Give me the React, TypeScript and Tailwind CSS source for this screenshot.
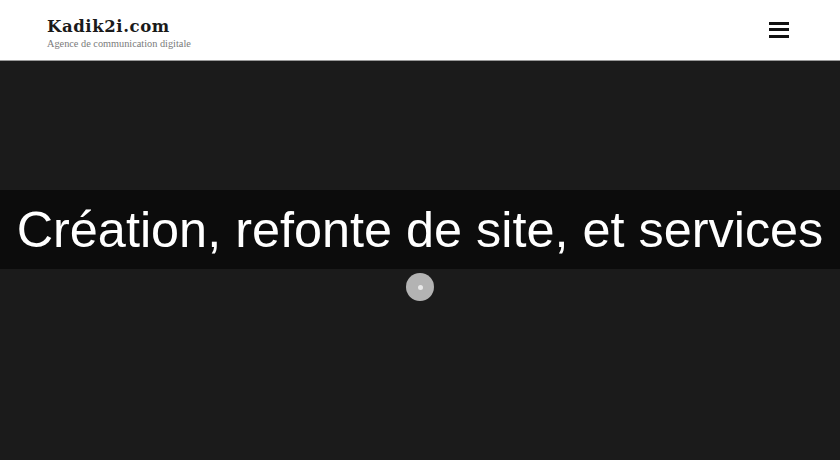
import React from 'react';

export default function App() {
  return (
    <div className="w-[840px] h-[460px] overflow-hidden bg-[#1b1b1b] flex flex-col">
      {/* Header */}
      <header className="h-[61px] shrink-0 bg-white border-b border-[#9a9a9a] flex items-center justify-between pl-[47px] pr-[51px]">
        <div className="flex flex-col pt-[7px]">
          <span className="text-[16.5px] leading-[20px] font-bold text-[#1a1a1a] tracking-[0.6px] [font-family:'DejaVu_Serif',serif]">
            Kadik2i.com
          </span>
          <span className="text-[10.3px] leading-[13px] text-[#7a7a7a] [font-family:'Liberation_Serif',serif]">
            Agence de communication digitale
          </span>
        </div>
        <button className="w-[20px] h-[16px] flex flex-col justify-between mt-[-1px]" aria-label="Menu">
          <span className="block h-[3px] w-full bg-[#111]" />
          <span className="block h-[3px] w-full bg-[#111]" />
          <span className="block h-[3px] w-full bg-[#111]" />
        </button>
      </header>

      {/* Hero */}
      <main className="flex-1 flex flex-col pt-[129px]">
        <div className="h-[79px] bg-[#0c0c0c] flex items-center justify-center">
          <h1 className="text-[50.4px] leading-none text-white whitespace-nowrap [font-family:'Liberation_Sans',Arial,sans-serif] pt-[2px]">
            Création, refonte de site, et services
          </h1>
        </div>
        <div className="flex justify-center mt-[4px]">
          <div className="w-[28px] h-[28px] rounded-full bg-[#b3b3b3] flex items-center justify-center">
            <div className="w-[5px] h-[5px] rounded-full bg-[#e8e8e8]" />
          </div>
        </div>
      </main>
    </div>
  );
}
